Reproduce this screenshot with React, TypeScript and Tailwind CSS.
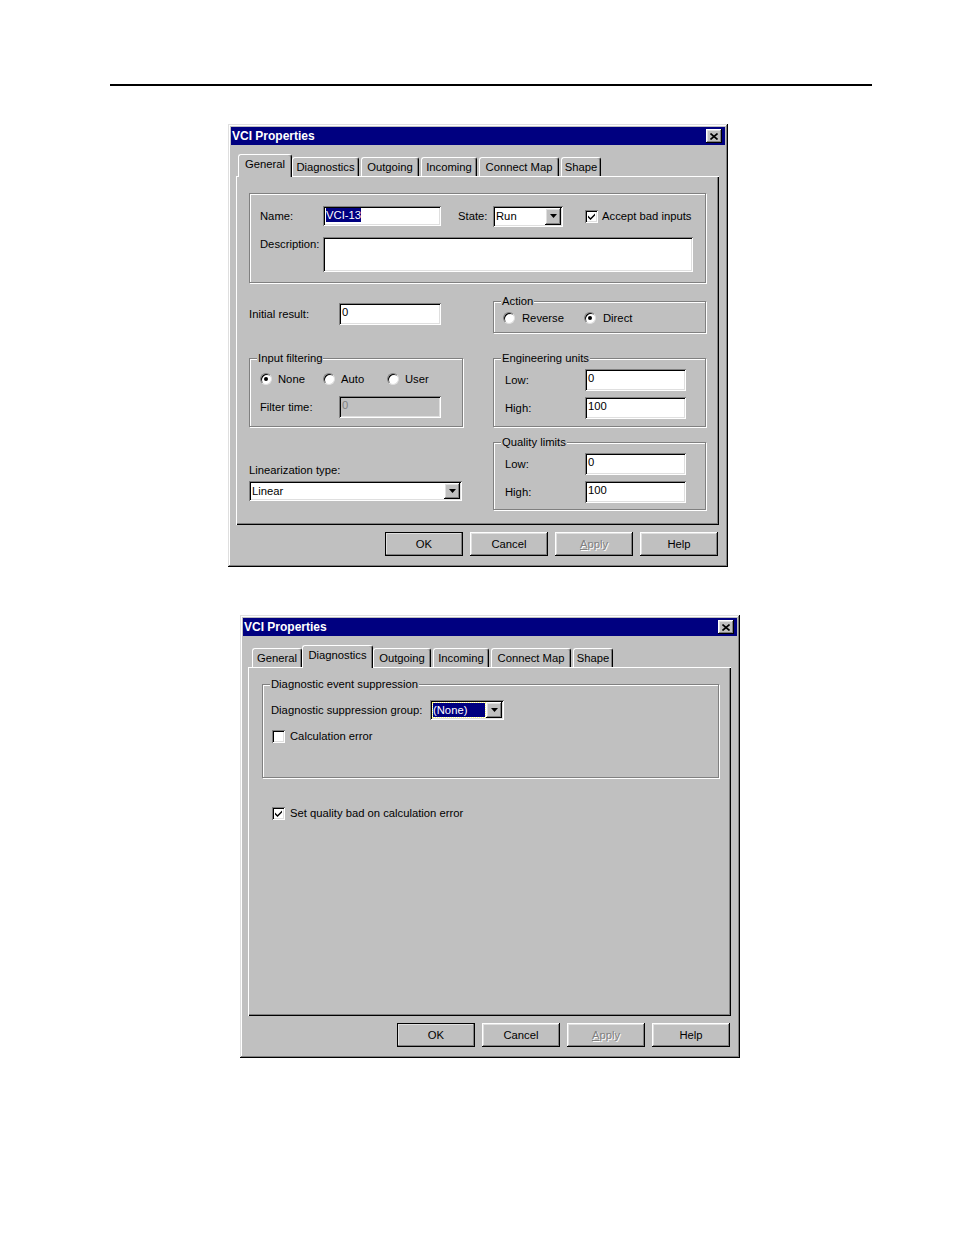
import type { ReactNode } from "react";

const raised =
  "shadow-[inset_-1px_-1px_0_0_#000,inset_1px_1px_0_0_#fff,inset_-2px_-2px_0_0_#808080,inset_2px_2px_0_0_#dfdfdf]";
const sunken =
  "shadow-[inset_1px_1px_0_0_#808080,inset_-1px_-1px_0_0_#fff,inset_2px_2px_0_0_#000,inset_-2px_-2px_0_0_#dfdfdf]";

function Field({
  className,
  children,
  disabled,
}: {
  className: string;
  children?: ReactNode;
  disabled?: boolean;
}) {
  return (
    <div
      className={`${sunken} ${disabled ? "bg-[#c0c0c0] text-[#808080]" : "bg-white"} flex items-start pt-[2px] pl-[3px] leading-[14px] shrink-0 ${className}`}
    >
      {children}
    </div>
  );
}

function Combo({ className, children }: { className: string; children: ReactNode }) {
  return (
    <div className={`${sunken} bg-white flex p-[2px] shrink-0 ${className}`}>
      <div className="flex-1 flex items-center pl-[1px] overflow-hidden leading-[14px]">{children}</div>
      <div className={`${raised} bg-[#c0c0c0] w-[16px] flex items-center justify-center`}>
        <svg width="7" height="4" viewBox="0 0 7 4">
          <polygon points="0,0 7,0 3.5,4" fill="#000" />
        </svg>
      </div>
    </div>
  );
}

function Check({ checked }: { checked?: boolean }) {
  return (
    <div className={`w-[13px] h-[13px] bg-white ${sunken} flex items-center justify-center shrink-0`}>
      {checked && (
        <svg width="7" height="7" viewBox="0 0 7 7">
          <polygon points="0,2.5 2.5,5 7,0.5 7,2.5 2.5,7 0,4.5" fill="#000" />
        </svg>
      )}
    </div>
  );
}

function Radio({ checked }: { checked?: boolean }) {
  return (
    <div className="w-[12px] h-[12px] rounded-full bg-white border border-t-[#808080] border-l-[#808080] border-r-[#dfdfdf] border-b-[#dfdfdf] shadow-[inset_1px_1px_0_0_#000] flex items-center justify-center shrink-0">
      {checked && <div className="w-[4px] h-[4px] rounded-full bg-black" />}
    </div>
  );
}

function Group({
  label,
  className,
  children,
}: {
  label?: string;
  className: string;
  children: ReactNode;
}) {
  return (
    <div
      className={`relative border border-[#808080] shadow-[inset_1px_1px_0_0_#fff,1px_1px_0_0_#fff] shrink-0 ${className}`}
    >
      {label && (
        <span className="absolute left-[7px] -top-[8px] bg-[#c0c0c0] px-[1px] leading-[14px]">{label}</span>
      )}
      {children}
    </div>
  );
}

function Button({ children, isDefault }: { children: ReactNode; isDefault?: boolean }) {
  return (
    <div
      className={`w-[78px] h-[24px] bg-[#c0c0c0] ${raised} flex items-center justify-center ${
        isDefault ? "outline outline-1 outline-black -outline-offset-1" : ""
      }`}
    >
      {children}
    </div>
  );
}

const tabs = [
  { name: "General", w: "w-[50px]", sel: "w-[54px]" },
  { name: "Diagnostics", w: "w-[67px]", sel: "w-[71px]" },
  { name: "Outgoing", w: "w-[58px]", sel: "w-[62px]" },
  { name: "Incoming", w: "w-[56px]", sel: "w-[60px]" },
  { name: "Connect Map", w: "w-[80px]", sel: "w-[84px]" },
  { name: "Shape", w: "w-[40px]", sel: "w-[44px]" },
];

function Dialog({ active, children }: { active: string; children: ReactNode }) {
  return (
    <div className="w-[500px] h-[443px] bg-[#c0c0c0] p-[3px] shadow-[inset_-1px_-1px_0_0_#000,inset_1px_1px_0_0_#dfdfdf,inset_-2px_-2px_0_0_#808080,inset_2px_2px_0_0_#fff] flex flex-col">
      <div className="h-[18px] bg-[#000080] flex items-center justify-between pl-[1px] pr-[3px]">
        <span className="text-white font-bold text-[12px] leading-[14px]">VCI Properties</span>
        <div className={`w-[16px] h-[14px] bg-[#c0c0c0] ${raised} flex items-center justify-center`}>
          <svg width="8" height="7" viewBox="0 0 8 7">
            <path d="M0.5 0.5 L7.5 6.5 M7.5 0.5 L0.5 6.5" stroke="#000" strokeWidth="1.6" />
          </svg>
        </div>
      </div>

      <div className="relative z-10 mt-[9px] ml-[9px] flex items-end gap-[2px] h-[22px]">
        {tabs.map((t) =>
          t.name === active ? (
            <div
              key={t.name}
              className={`${t.sel} -mx-[2px] h-[23px] -mb-[1px] bg-[#c0c0c0] border-t border-l border-white border-r border-r-black rounded-t-[3px] shadow-[inset_-1px_0_0_0_#808080] flex justify-center pt-[2px] leading-[14px]`}
            >
              {t.name}
            </div>
          ) : (
            <div
              key={t.name}
              className={`${t.w} h-[19px] bg-[#c0c0c0] border-t border-l border-white border-r border-r-black rounded-t-[3px] shadow-[inset_-1px_0_0_0_#808080] flex justify-center pt-[2px] leading-[14px]`}
            >
              {t.name}
            </div>
          )
        )}
      </div>

      <div className="ml-[5px] w-[483px] h-[349px] shadow-[inset_1px_1px_0_0_#fff,inset_-1px_-1px_0_0_#000,inset_-2px_-2px_0_0_#808080]">
        {children}
      </div>

      <div className="mt-[7px] flex justify-end gap-[7px] pr-[7px]">
        <Button isDefault>OK</Button>
        <Button>Cancel</Button>
        <Button>
          <span className="text-[#808080] [text-shadow:1px_1px_0_#fff]">
            <u>A</u>pply
          </span>
        </Button>
        <Button>Help</Button>
      </div>
    </div>
  );
}

function GeneralPage() {
  return (
    <div className="pt-[17px] pl-[13px]">
      <Group className="w-[457px] h-[90px] pt-[12px] pl-[10px]">
        <div className="flex items-center h-[20px]">
          <span className="w-[63px]">Name:</span>
          <Field className="w-[118px] h-[20px] pl-[2px]">
            <span className="bg-[#000080] text-white">VCI-13</span>
          </Field>
          <span className="ml-[17px] w-[35px]">State:</span>
          <Combo className="w-[70px] h-[21px]">Run</Combo>
          <div className="ml-[22px]">
            <Check checked />
          </div>
          <span className="ml-[4px]">Accept bad inputs</span>
        </div>
        <div className="flex mt-[11px]">
          <span className="w-[63px] leading-[14px]">Description:</span>
          <Field className="w-[370px] h-[35px]" />
        </div>
      </Group>

      <div className="flex justify-between w-[457px] mt-[18px]">
        <div className="flex items-center h-[22px] mt-[2px]">
          <span className="w-[90px]">Initial result:</span>
          <Field className="w-[102px] h-[22px]">0</Field>
        </div>
        <Group label="Action" className="w-[213px] h-[32px] pt-[10px] pl-[9px]">
          <div className="flex items-center h-[12px]">
            <div className="flex items-center w-[81px]">
              <Radio />
              <span className="ml-[7px]">Reverse</span>
            </div>
            <Radio checked />
            <span className="ml-[7px]">Direct</span>
          </div>
        </Group>
      </div>

      <div className="flex justify-between w-[457px] mt-[25px]">
        <div className="w-[214px] flex flex-col">
          <Group label="Input filtering" className="w-[214px] h-[69px] pt-[14px] pl-[10px]">
            <div className="flex items-center h-[12px]">
              <div className="flex items-center w-[63px]">
                <Radio checked />
                <span className="ml-[6px]">None</span>
              </div>
              <div className="flex items-center w-[64px]">
                <Radio />
                <span className="ml-[6px]">Auto</span>
              </div>
              <Radio />
              <span className="ml-[6px]">User</span>
            </div>
            <div className="flex items-center mt-[11px]">
              <span className="w-[79px]">Filter time:</span>
              <Field disabled className="w-[102px] h-[22px]">
                0
              </Field>
            </div>
          </Group>
          <span className="mt-[36px] leading-[14px]">Linearization type:</span>
          <Combo className="mt-[4px] w-[213px] h-[20px]">Linear</Combo>
        </div>

        <div className="w-[213px] flex flex-col">
          <Group label="Engineering units" className="w-[213px] h-[69px] pt-[10px] pl-[11px]">
            <div className="flex items-center">
              <span className="w-[80px]">Low:</span>
              <Field className="w-[101px] h-[22px]">0</Field>
            </div>
            <div className="flex items-center mt-[6px]">
              <span className="w-[80px]">High:</span>
              <Field className="w-[101px] h-[22px]">100</Field>
            </div>
          </Group>
          <Group label="Quality limits" className="mt-[15px] w-[213px] h-[68px] pt-[10px] pl-[11px]">
            <div className="flex items-center">
              <span className="w-[80px]">Low:</span>
              <Field className="w-[101px] h-[22px]">0</Field>
            </div>
            <div className="flex items-center mt-[6px]">
              <span className="w-[80px]">High:</span>
              <Field className="w-[101px] h-[22px]">100</Field>
            </div>
          </Group>
        </div>
      </div>
    </div>
  );
}

function DiagnosticsPage() {
  return (
    <div className="pt-[17px] pl-[14px]">
      <Group
        label="Diagnostic event suppression"
        className="w-[457px] h-[94px] pt-[15px] pl-[8px]"
      >
        <div className="flex items-center h-[20px]">
          <span className="w-[159px]">Diagnostic suppression group:</span>
          <Combo className="w-[74px] h-[20px]">
            <span className="w-full mr-[1px] bg-[#000080] text-white outline outline-1 outline-dotted outline-[#ffff80]">
              (None)
            </span>
          </Combo>
        </div>
        <div className="flex items-center mt-[10px] ml-[1px]">
          <Check />
          <span className="ml-[5px]">Calculation error</span>
        </div>
      </Group>
      <div className="flex items-center mt-[29px] ml-[10px]">
        <Check checked />
        <span className="ml-[5px]">Set quality bad on calculation error</span>
      </div>
    </div>
  );
}

export default function App() {
  return (
    <div className="w-[954px] h-[1235px] bg-white pt-[84px] font-[family-name:'Liberation_Sans',Arial,sans-serif] text-[11.25px] leading-[13px] text-black">
      <div className="ml-[110px] w-[762px] h-[2px] bg-black" />
      <div className="mt-[38px] ml-[228px]">
        <Dialog active="General">
          <GeneralPage />
        </Dialog>
      </div>
      <div className="mt-[48px] ml-[240px]">
        <Dialog active="Diagnostics">
          <DiagnosticsPage />
        </Dialog>
      </div>
    </div>
  );
}
